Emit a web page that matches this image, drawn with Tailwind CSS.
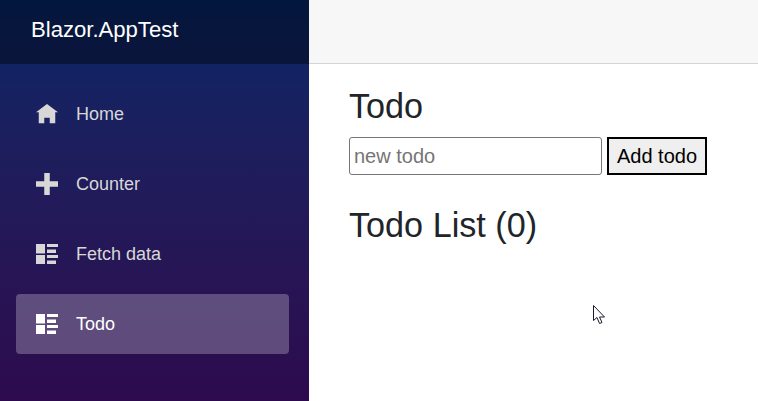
<!DOCTYPE html>
<html lang="en">
<head>
    <meta charset="UTF-8">
    <meta name="viewport" content="width=device-width, initial-scale=1.0">
    <title>Todo</title>
    <script src="https://cdn.jsdelivr.net/npm/@tailwindcss/browser@4"></script>
</head>
<body class="relative h-[401px] overflow-hidden bg-white font-['Liberation_Sans',Arial,sans-serif] text-[#212529]">
    <div class="flex h-full">
        <!-- Sidebar -->
        <aside class="w-[309px] shrink-0 bg-linear-to-b from-[#052767] to-[#2d0a4d]">
            <div class="flex h-16 items-center bg-black/40 pb-1 pl-[31px] text-[22.1px] text-white">Blazor.AppTest</div>
            <nav class="flex flex-col gap-[10px] pl-4 pr-5 pt-5 text-[18px] text-[#d7d7d7]">
                <a href="#" class="flex h-[60px] items-center rounded pl-5">
                    <svg class="mr-[18px] h-[19.25px] w-[22px] fill-current" viewBox="0 0 8 7"><path d="M4 0l-4 3h1v4h2v-2h2v2h2v-4.03l1 .03-4-3z"/></svg>
                    Home
                </a>
                <a href="#" class="flex h-[60px] items-center rounded pl-5">
                    <svg class="mr-[18px] h-[22px] w-[22px] fill-current" viewBox="0 0 8 8"><path d="M3 0v3h-3v2h3v3h2v-3h3v-2h-3v-3h-2z"/></svg>
                    Counter
                </a>
                <a href="#" class="flex h-[60px] items-center rounded pl-5">
                    <svg class="mr-[18px] h-[20px] w-[22px] fill-current" viewBox="0 0 22 20"><path d="M0 0h9v9.5h-9zM11 0h11v3h-11zM11 5.5h9v3.5h-9zM0 11h9v9h-9zM11 11h11v3h-11zM11 16.5h9v3.5h-9z"/></svg>
                    Fetch data
                </a>
                <a href="#" class="flex h-[60px] items-center rounded bg-white/25 pl-5 text-white">
                    <svg class="mr-[18px] h-[20px] w-[22px] fill-current" viewBox="0 0 22 20"><path d="M0 0h9v9.5h-9zM11 0h11v3h-11zM11 5.5h9v3.5h-9zM0 11h9v9h-9zM11 11h11v3h-11zM11 16.5h9v3.5h-9z"/></svg>
                    Todo
                </a>
            </nav>
        </aside>

        <!-- Main -->
        <main class="flex-1">
            <div class="h-16 border-b border-[#d6d5d5] bg-[#f7f7f7]"></div>
            <div class="pl-10 pt-[21px]">
                <h1 class="mb-[9px] text-[34.2px] leading-[43px]">Todo</h1>
                <div class="flex h-[38px] gap-[5px]">
                    <input type="text" placeholder="new todo" class="w-[253px] rounded-[3px] border border-[#767676] px-1 text-[20px] placeholder:text-[#757575]">
                    <button class="w-[100px] border-2 border-black bg-[#efefef] text-[20px] text-black">Add todo</button>
                </div>
                <h3 class="mt-[29px] text-[34.2px] leading-[43px]">Todo List (0)</h3>
            </div>
        </main>
    </div>

    <!-- Mouse pointer in the screenshot -->
    <svg class="absolute left-[593px] top-[305px] h-[20px] w-[14px]" viewBox="0 0 14 20"><path d="M0.5 0.5v15l3.5-3 2.5 6 2.5-1-2.5-5.5h5z" fill="#fff" stroke="#1a1a2e" stroke-width="1"/></svg>
</body>
</html>
